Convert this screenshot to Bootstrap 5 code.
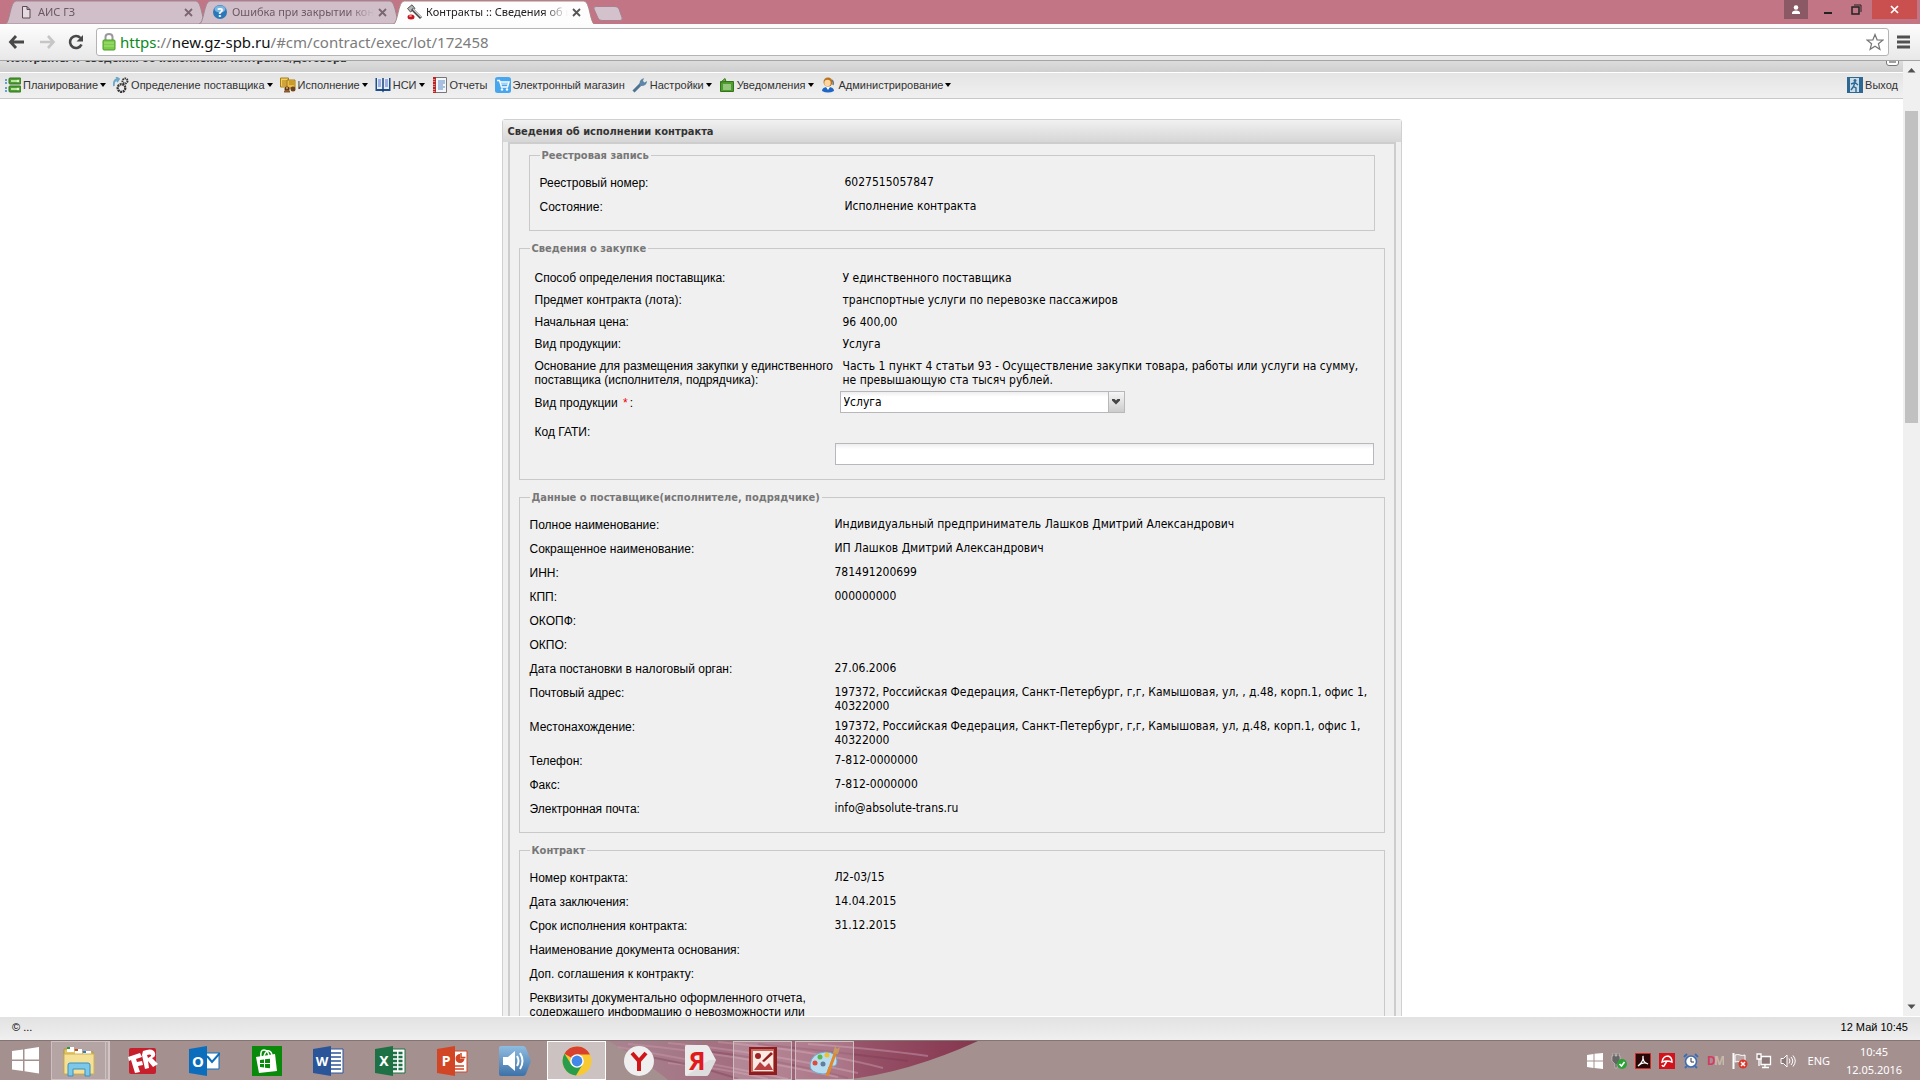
<!DOCTYPE html>
<html lang="ru">
<head>
<meta charset="utf-8">
<meta name="viewport" content="width=device-width, initial-scale=1">
<title>Контракты :: Сведения об исполнении контракта/договора</title>
<link rel="stylesheet" href="https://cdn.jsdelivr.net/npm/bootstrap@5.3.0/dist/css/bootstrap.min.css">
<style>
:root{--ui:"Liberation Sans",Arial,sans-serif;--form:"DejaVu Sans Condensed","DejaVu Sans",sans-serif;--sys:"Noto Sans","Open Sans",sans-serif}
body{font-family:var(--ui);font-size:11px;line-height:14px;color:#000;background:#fff}
button{font:inherit;color:inherit;border:0;background:none;padding:0}
svg{display:block;flex:none}

/* browser frame */
.tabstrip{background:#c27585;height:24px;font-family:var(--sys);padding-left:5px}
.btab{position:relative;width:202px;height:24px;margin-right:-8px;padding:0 10px 0 13px;color:#6b5862}
.btab.current{z-index:2;color:#222}
.btab .shape{position:absolute;inset:0;width:100%;height:100%;z-index:-1}
.btab{isolation:isolate}
.btab .cap{width:142px;-webkit-mask-image:linear-gradient(90deg,#000 82%,transparent 100%);mask-image:linear-gradient(90deg,#000 82%,transparent 100%)}
.newtab{margin:6px 0 0 6px}
.winbtn{height:19px;width:24px}
.winbtn.user{background:#8b5865}
.winbtn.close{background:#c9504f;width:45px;margin-right:3px}
.toolbar{height:37px;background:linear-gradient(#fdfdfd,#e8e8e8);border-bottom:1px solid #a4a4a4;padding:4px 10px 4px 8px}
.toolbar .nav-ic{width:20px;margin-right:10px}
.address{height:28px;border:1px solid #b4b4b4;border-radius:3px;background:#fff;padding:0 4px 0 5px;margin:0 8px 0 -2px}
.address .url{font-family:var(--sys);font-size:15px;line-height:24px;color:#7c7c7c}
.url .sec{color:#0b8a1b}.url .host{color:#111}

/* application */
.pagehead{height:12px;background:linear-gradient(#dcdcdc,#cfcfcf);border-bottom:1px solid #fff;font:bold 11px/14px var(--form);color:#333;padding:0 4px 0 6px}
.pagehead .headtext{margin-top:-9px}
.menubar{height:26px;background:linear-gradient(#e4e4e4,#f0f0f0);border-bottom:1px solid #c8c8c8;padding:0 5px 2px;gap:7px;color:#333}
.menubar button,.menubar a{gap:2px;color:#333}
.caret{border:3px solid transparent;border-top:4px solid #000;border-bottom:0}
.scroller{width:17px;background:#f0f0f0;padding:6px 2px}
.scroller .thumb{height:312px;background:#c1c1c1;margin-top:38px}
.panelbox{width:100%;max-width:900px;border:1px solid #d0d0d0;border-radius:3px 3px 0 0;background:#f0f0f0;margin:20px auto 0}
.panelbox h1{height:22px;margin:0;padding:1px 5px 0;font:bold 11px/21px var(--form);color:#333;background:linear-gradient(#f1f1f1,#d6d6d6)}
.panelin{margin:0 5px;border:2px solid #cdcdcd;border-bottom:0;padding:4px 9px 0 9px}
.group{border:1px solid #c9c9c9;padding:0 10px 11px;margin-bottom:10px}
.group.inset{margin:0 10px 10px 10px}
.group legend{float:none;width:auto;margin:0 0 8px;padding:1px 2px 0;font:bold 11px/14px var(--form);color:#777}
.frow{min-height:24px;font-family:var(--form);font-size:12px}
.frow .lab{font-family:var(--ui);width:305px;flex:none;padding-top:5px}
.frow .val{padding:4px 0 2px;flex:1;min-width:0}
.purchase{padding:3px 0 3px 5px}
.purchase .frow{min-height:22px}
.purchase .lab{width:308px;padding-top:4px}
.purchase .val{padding-bottom:4px}
.purchase .frow.pick{min-height:30px}
.purchase .frow.pick .lab{padding-top:5px}
.purchase .frow.code .lab{width:300px}
.pick select{appearance:none;width:285px;height:22px;margin-left:-3px;border:1px solid #b8b8bc;border-radius:0;padding:0 20px 0 3px;font:12px var(--form);color:#000;background:linear-gradient(#eee,#fff 5px)}
.pick .arrow{position:absolute;right:1px;top:1px;width:16px;height:20px;border-left:1px solid #b8b8bc;background:linear-gradient(#f6f6f6,#ccc);pointer-events:none}
.code input{width:100%;height:22px;margin-top:22px;border:1px solid #b8b8bc;background:linear-gradient(#eee,#fff 5px);font:12px var(--form);padding:0 3px}
.star{color:#e00;padding:0 2px}
.statusbar{height:25px;border-top:1px solid #fff;background:linear-gradient(#e2e2e2,#efefef);padding:0 12px 2px}

/* taskbar */
.taskbar{height:40px;background:#a59090;border-top:1px solid #857474;isolation:isolate}
.wall{position:absolute;left:608px;top:0;z-index:-1}
.startbtn{width:51px;padding-left:12px}
.tbtn{width:59px;height:39px;margin-right:3px;border:1px solid transparent}
.tbtn.open{border-color:#cdbfc2;background:rgba(255,255,255,.18)}
.tbtn.active{border:1px solid #fff;background:rgba(255,255,255,.45)}
.tbtn.stack{width:55px;margin-right:7px;box-shadow:3px 0 0 -1px #b8a9a9,4px 0 0 0 #d0c4c4}
.tray{gap:8px;color:#fff;font-family:var(--sys)}
.clock{width:82px;padding-right:10px}
svg text{font-family:var(--sys);font-weight:bold}
</style>
<script src="https://cdn.jsdelivr.net/npm/bootstrap@5.3.0/dist/js/bootstrap.bundle.min.js"></script>
</head>
<body>
<div class="d-flex flex-column vh-100 overflow-hidden">

<header>
  <div class="tabstrip d-flex">
    <div class="btab d-flex align-items-center gap-1">
      <svg class="shape" viewBox="0 0 202 24" preserveAspectRatio="none"><path d="M0 24C5 24 5 1 11 1H191C197 1 197 24 202 24Z" fill="#d0bfc9" stroke="#a18591"/></svg>
      <svg width="16" height="16" viewBox="0 0 16 16"><path d="M4.500 2.500h4.500l3 3v8.500h-7.500zM9 2.500v3h3" fill="#e4d9df" stroke="#5b4a53"/></svg>
      <span class="cap text-nowrap overflow-hidden">АИС ГЗ</span>
      <button aria-label="Закрыть"><svg width="9" height="9" viewBox="0 0 9 9"><path d="M1 1l7 7M8 1l-7 7" stroke="#7a6670" stroke-width="1.800"/></svg></button>
    </div>
    <div class="btab d-flex align-items-center gap-1">
      <svg class="shape" viewBox="0 0 202 24" preserveAspectRatio="none"><path d="M0 24C5 24 5 1 11 1H191C197 1 197 24 202 24Z" fill="#d0bfc9" stroke="#a18591"/></svg>
      <svg width="16" height="16" viewBox="0 0 16 16"><circle cx="8" cy="8" r="7" fill="#2a78b8"/><ellipse cx="8" cy="5" rx="5.500" ry="3.500" fill="#7cb6e0"/><text x="8" y="12.500" font-size="12" text-anchor="middle" fill="#fff">?</text></svg>
      <span class="cap text-nowrap overflow-hidden">Ошибка при закрытии контракта</span>
      <button aria-label="Закрыть"><svg width="9" height="9" viewBox="0 0 9 9"><path d="M1 1l7 7M8 1l-7 7" stroke="#7a6670" stroke-width="1.800"/></svg></button>
    </div>
    <div class="btab current d-flex align-items-center gap-1">
      <svg class="shape" viewBox="0 0 202 24" preserveAspectRatio="none"><path d="M0 24.500C5 24 5 1 11 1H191C197 1 197 24 202 24.500Z" fill="#fdfdfd" stroke="#a88"/></svg>
      <svg width="16" height="16" viewBox="0 0 16 16"><path d="M1.500 4.500L6 .8l3 3.700-4.500 3.500z" fill="#b5b5b5" stroke="#555"/><path d="M6 5l9 9" stroke="#444" stroke-width="2.800"/><path d="M7 5l8 8" stroke="#ccc" stroke-width="1.200"/><ellipse cx="5" cy="13" rx="3.500" ry="2.500" fill="#c8141e"/><ellipse cx="4.500" cy="12" rx="1.500" ry="1" fill="#f58a8a"/></svg>
      <span class="cap text-nowrap overflow-hidden">Контракты :: Сведения об исполнении</span>
      <button aria-label="Закрыть"><svg width="9" height="9" viewBox="0 0 9 9"><path d="M1 1l7 7M8 1l-7 7" stroke="#555" stroke-width="1.800"/></svg></button>
    </div>
    <button class="newtab align-self-start" aria-label="Новая вкладка"><svg width="31" height="15" viewBox="0 0 31 15"><path d="M3 .5H22Q25 .5 26 3L29 11.500Q30 14.500 27 14.500H9Q6 14.500 5 12L1 3Q0 .5 3 .5Z" fill="#d3c2cc" stroke="#a88090"/></svg></button>
    <div class="ms-auto d-flex">
      <button class="winbtn user d-flex justify-content-center align-items-center" aria-label="Профиль"><svg width="12" height="10" viewBox="0 0 12 10"><circle cx="6" cy="2.500" r="2.300" fill="#fff"/><path d="M2 9V8Q2 5.500 6 5.500T10 8V9Z" fill="#fff"/></svg></button>
      <button class="winbtn ms-2 d-flex justify-content-center align-items-center" aria-label="Свернуть"><svg width="10" height="10" viewBox="0 0 10 10"><path d="M1 8h8" stroke="#222" stroke-width="2"/></svg></button>
      <button class="winbtn mx-1 d-flex justify-content-center align-items-center" aria-label="Восстановить"><svg width="11" height="11" viewBox="0 0 11 11"><path d="M1 3h7v7H1z" fill="none" stroke="#222" stroke-width="1.500"/><path d="M3 1h7v7" fill="none" stroke="#222"/></svg></button>
      <button class="winbtn close d-flex justify-content-center align-items-center" aria-label="Закрыть окно"><svg width="9" height="9" viewBox="0 0 9 9"><path d="M1 1l7 7M8 1l-7 7" stroke="#fff" stroke-width="1.700"/></svg></button>
    </div>
  </div>
  <div class="toolbar d-flex align-items-center">
    <button class="nav-ic" aria-label="Назад"><svg width="18" height="16" viewBox="0 0 18 16"><path d="M8 2L2.500 8L8 14M3 8H16" fill="none" stroke="#484848" stroke-width="2.800"/></svg></button>
    <button class="nav-ic" aria-label="Вперёд"><svg width="18" height="16" viewBox="0 0 18 16"><path d="M10 2L15.500 8L10 14M15 8H2" fill="none" stroke="#c6c6c6" stroke-width="2.600"/></svg></button>
    <button class="nav-ic" aria-label="Обновить"><svg width="17" height="16" viewBox="0 0 17 16"><path d="M12.500 4A6 6 0 1 0 13.500 10.500" fill="none" stroke="#484848" stroke-width="2.600"/><path d="M15 1v6.500h-6.500z" fill="#484848"/></svg></button>
    <div class="address flex-grow-1 d-flex align-items-center">
      <svg width="14" height="20" viewBox="0 0 14 20" class="me-1"><path d="M3.500 9V5Q3.500 2 7 2T10.500 5V9" fill="none" stroke="#999" stroke-width="2"/><rect x="1" y="8" width="12" height="10" rx="1" fill="#7ccc4a" stroke="#4b9a2c"/><path d="M2 11h10M2 14h10" stroke="#a8e27f"/></svg>
      <div class="url flex-grow-1"><span class="sec">https</span>://<span class="host">new.gz-spb.ru</span>/#cm/contract/exec/lot/172458</div>
      <svg width="18" height="18" viewBox="0 0 18 18"><path d="M9 1.500l2.100 5.300 5.700.3-4.400 3.600 1.500 5.600L9 13.200 4.100 16.300l1.500-5.600L1.200 7.100l5.700-.3z" fill="#fff" stroke="#777" stroke-width="1.200"/></svg>
    </div>
    <button aria-label="Меню"><svg width="13" height="14" viewBox="0 0 13 14"><path d="M0 2h13M0 7h13M0 12h13" stroke="#505050" stroke-width="3"/></svg></button>
  </div>
</header>

<div class="d-flex flex-grow-1 overflow-hidden">
  <div class="flex-grow-1 overflow-hidden">
    <div class="pagehead d-flex justify-content-between overflow-hidden">
      <div class="headtext">Контракты :: Сведения об исполнении контракта/договора</div>
      <svg width="13" height="5" viewBox="0 0 13 5"><path d="M.5 0V2Q.5 4.500 3 4.500H10Q12.500 4.500 12.500 2V0" fill="#fff" stroke="#777"/><path d="M3 1h7" stroke="#444"/></svg>
    </div>
    <nav class="menubar d-flex align-items-center">
      <button class="d-flex align-items-center"><svg width="16" height="16" viewBox="0 0 16 16"><path d="M0 3h2M0 6h2M0 11h2M0 14h2" stroke="#3a8ac0" stroke-width="1.500"/><rect x="4" y="1" width="12" height="6" rx="1" fill="#4f9d33" stroke="#2f7420"/><rect x="4" y="9" width="12" height="6" rx="1" fill="#4f9d33" stroke="#2f7420"/><path d="M6 4h6M6 12h6" stroke="#b4e296" stroke-width="2"/><circle cx="13" cy="4" r="1.300" fill="#e0f5d0"/><circle cx="13" cy="12" r="1.300" fill="#e0f5d0"/></svg><span>Планирование</span><i class="caret"></i></button>
      <button class="d-flex align-items-center"><svg width="16" height="16" viewBox="0 0 16 16"><path d="M1 9Q0 3 5 2M3 0l3 2-2 3" fill="none" stroke="#6aa8c8" stroke-width="1.800"/><circle cx="12" cy="4" r="2.500" fill="none" stroke="#333" stroke-width="2" stroke-dasharray="1.500 .7"/><circle cx="8.500" cy="11" r="3.800" fill="none" stroke="#333" stroke-width="2.300" stroke-dasharray="2 .6"/></svg><span>Определение поставщика</span><i class="caret"></i></button>
      <button class="d-flex align-items-center"><svg width="16" height="16" viewBox="0 0 16 16"><path d="M.5 1h8v9h-8z" fill="#f2cf5c" stroke="#a87a18"/><path d="M2 4h5M2 6h5M2 8h5" stroke="#a87a18"/><path d="M7 3h8v8H7z" fill="#e9bd45" stroke="#a87a18"/><path d="M9 5h5M9 7h5" stroke="#a87a18"/><circle cx="7" cy="12" r="2.500" fill="#5a3418"/><circle cx="13" cy="12" r="2.500" fill="#6e4420"/><circle cx="7" cy="11" r="1" fill="#d9a070"/><path d="M4 14q3-3 6 0v1.500H4z" fill="#8d5a2b"/></svg><span>Исполнение</span><i class="caret"></i></button>
      <button class="d-flex align-items-center"><svg width="16" height="16" viewBox="0 0 16 16"><path d="M.5 1h15v13H9l-1 1.500L7 14H.5z" fill="#1f4f88"/><path d="M2 1h5.500v11H2zM8.500 1H14v11H8.500z" fill="#e6eefc"/><path d="M3 3h3M3 5h3M3 7h3M3 9h3M10 3h3M10 5h3M10 7h3M10 9h3" stroke="#5b6fd0"/><path d="M8 1v13" stroke="#153b68"/></svg><span>НСИ</span><i class="caret"></i></button>
      <a href="#reports" class="d-flex align-items-center text-decoration-none"><svg width="16" height="16" viewBox="0 0 16 16"><path d="M3.500.5h11v15h-11z" fill="#f4f6fa" stroke="#777"/><path d="M2.500 0v16" stroke="#c32020" stroke-width="3" stroke-dasharray="2 .5"/><path d="M6 4h7M6 6h7M6 8h5M6 10h7M6 12h5" stroke="#5a8ac6"/></svg><span>Отчеты</span></a>
      <a href="#shop" class="d-flex align-items-center text-decoration-none"><svg width="16" height="16" viewBox="0 0 16 16"><rect width="16" height="16" rx="2.500" fill="#47a7ee"/><path d="M2 3.500h2.500l2 6.500h6l1.500-5H5.500" fill="none" stroke="#fff" stroke-width="1.400"/><path d="M6 7h7" stroke="#fff"/><circle cx="7" cy="12.500" r="1.200" fill="#fff"/><circle cx="12" cy="12.500" r="1.200" fill="#fff"/></svg><span>Электронный магазин</span></a>
      <button class="d-flex align-items-center"><svg width="16" height="16" viewBox="0 0 16 16"><path d="M1.500 14.500L9 7" stroke="#4f7391" stroke-width="3"/><path d="M8 9Q6 3 12 1L11 4l1.500 1.500L15 4Q15 9 9 9z" fill="#5f86a6"/></svg><span>Настройки</span><i class="caret"></i></button>
      <button class="d-flex align-items-center"><svg width="16" height="16" viewBox="0 0 16 16"><path d="M1.500 4.500h13v10h-13z" fill="#4f9d2f" stroke="#34751c"/><path d="M2 5L6 1.500l1 3z" fill="#6cb848" stroke="#34751c"/><path d="M4 8h8M4 10h8M4 12h8" stroke="#d8f0c8"/></svg><span>Уведомления</span><i class="caret"></i></button>
      <button class="d-flex align-items-center"><svg width="16" height="16" viewBox="0 0 16 16"><circle cx="7" cy="5" r="4.500" fill="#b8731d"/><circle cx="6.500" cy="6" r="3.200" fill="#ffd5a0"/><path d="M11 3q2 2 1 5" stroke="#777" fill="none" stroke-width="1.500"/><path d="M1 14q0-4 6-4t6 4q-6 3-12 0z" fill="#1d66c4"/><path d="M5 10l2 3 2-3z" fill="#fff"/></svg><span>Администрирование</span><i class="caret"></i></button>
      <a href="#logout" class="d-flex align-items-center text-decoration-none ms-auto"><svg width="16" height="16" viewBox="0 0 16 16"><rect width="16" height="16" fill="#2d6893"/><path d="M3 1h9v14H3z" fill="#c9dce8"/><circle cx="8" cy="3.500" r="1.500" fill="#2d6893"/><path d="M8 5L6.500 9.500 9 11v4M6.500 9.500L4 13M4 7l4-1.500 3 2.500" fill="none" stroke="#2d6893" stroke-width="1.400"/></svg><span>Выход</span></a>
    </nav>
    <main class="px-2">
      <section class="panelbox">
        <h1>Сведения об исполнении контракта</h1>
        <div class="panelin">
          <fieldset class="group inset">
            <legend>Реестровая запись</legend>
            <div class="frow d-flex"><div class="lab">Реестровый номер:</div><div class="val">6027515057847</div></div>
            <div class="frow d-flex"><div class="lab">Состояние:</div><div class="val">Исполнение контракта</div></div>
          </fieldset>
          <fieldset class="group">
            <legend>Сведения о закупке</legend>
            <div class="purchase">
              <div class="frow d-flex"><div class="lab">Способ определения поставщика:</div><div class="val">У единственного поставщика</div></div>
              <div class="frow d-flex"><div class="lab">Предмет контракта (лота):</div><div class="val">транспортные услуги по перевозке пассажиров</div></div>
              <div class="frow d-flex"><div class="lab">Начальная цена:</div><div class="val">96 400,00</div></div>
              <div class="frow d-flex"><div class="lab">Вид продукции:</div><div class="val">Услуга</div></div>
              <div class="frow d-flex"><div class="lab">Основание для размещения закупки у единственного поставщика (исполнителя, подрядчика):</div><div class="val">Часть 1 пункт 4 статьи 93 - Осуществление закупки товара, работы или услуги на сумму,<br>не превышающую ста тысяч рублей.</div></div>
              <div class="frow pick d-flex"><label class="lab" for="kind">Вид продукции <span class="star">*</span>:</label><div class="position-relative align-self-start"><select id="kind"><option>Услуга</option><option>Товар</option><option>Работа</option></select><span class="arrow d-flex justify-content-center align-items-center"><svg width="8" height="6" viewBox="0 0 8 6"><path d="M0 0h2.500L4 1.500 5.500 0H8v1.500L4 5.500 0 1.500z" fill="#444"/></svg></span></div></div>
              <div class="frow code d-flex"><label class="lab" for="gati">Код ГАТИ:</label><div class="flex-grow-1"><input id="gati" type="text"></div></div>
            </div>
          </fieldset>
          <fieldset class="group">
            <legend>Данные о поставщике(исполнителе, подрядчике)</legend>
            <div class="frow d-flex"><div class="lab">Полное наименование:</div><div class="val">Индивидуальный предприниматель Лашков Дмитрий Александрович</div></div>
            <div class="frow d-flex"><div class="lab">Сокращенное наименование:</div><div class="val">ИП Лашков Дмитрий Александрович</div></div>
            <div class="frow d-flex"><div class="lab">ИНН:</div><div class="val">781491200699</div></div>
            <div class="frow d-flex"><div class="lab">КПП:</div><div class="val">000000000</div></div>
            <div class="frow d-flex"><div class="lab">ОКОПФ:</div><div class="val"></div></div>
            <div class="frow d-flex"><div class="lab">ОКПО:</div><div class="val"></div></div>
            <div class="frow d-flex"><div class="lab">Дата постановки в налоговый орган:</div><div class="val">27.06.2006</div></div>
            <div class="frow d-flex"><div class="lab">Почтовый адрес:</div><div class="val">197372, Российская Федерация, Санкт-Петербург, г,г, Камышовая, ул, , д.48, корп.1, офис 1,<br>40322000</div></div>
            <div class="frow d-flex"><div class="lab">Местонахождение:</div><div class="val">197372, Российская Федерация, Санкт-Петербург, г,г, Камышовая, ул, д.48, корп.1, офис 1,<br>40322000</div></div>
            <div class="frow d-flex"><div class="lab">Телефон:</div><div class="val">7-812-0000000</div></div>
            <div class="frow d-flex"><div class="lab">Факс:</div><div class="val">7-812-0000000</div></div>
            <div class="frow d-flex"><div class="lab">Электронная почта:</div><div class="val">info@absolute-trans.ru</div></div>
          </fieldset>
          <fieldset class="group">
            <legend>Контракт</legend>
            <div class="frow d-flex"><div class="lab">Номер контракта:</div><div class="val">Л2-03/15</div></div>
            <div class="frow d-flex"><div class="lab">Дата заключения:</div><div class="val">14.04.2015</div></div>
            <div class="frow d-flex"><div class="lab">Срок исполнения контракта:</div><div class="val">31.12.2015</div></div>
            <div class="frow d-flex"><div class="lab">Наименование документа основания:</div><div class="val"></div></div>
            <div class="frow d-flex"><div class="lab">Доп. соглашения к контракту:</div><div class="val"></div></div>
            <div class="frow d-flex"><div class="lab">Реквизиты документально оформленного отчета, содержащего информацию о невозможности или</div><div class="val"></div></div>
          </fieldset>
        </div>
      </section>
    </main>
  </div>
  <div class="scroller d-flex flex-column">
    <svg class="mx-auto" width="9" height="6" viewBox="0 0 9 6"><path d="M4.500 1L8.500 5.500h-8z" fill="#505050"/></svg>
    <div class="thumb"></div>
    <svg class="mx-auto mt-auto" width="9" height="6" viewBox="0 0 9 6"><path d="M4.500 5L.5.5h8z" fill="#505050"/></svg>
  </div>
</div>

<div class="statusbar d-flex justify-content-between align-items-center"><span>© ...</span><span>12 Май 10:45</span></div>

<footer class="taskbar position-relative d-flex">
  <svg class="wall" width="372" height="39" viewBox="0 0 372 39"><defs><linearGradient id="wg"><stop offset="0" stop-color="#a88490"/><stop offset=".5" stop-color="#a06478"/><stop offset="1" stop-color="#86364f"/></linearGradient></defs><path d="M0 0H370Q300 32 235 39H60Q40 22 0 0Z" fill="url(#wg)"/><path d="M20 3Q120 12 230 36M60 2Q150 10 250 32M110 1Q210 10 275 27M10 6Q90 20 180 38M200 3Q270 8 320 15M60 22Q110 26 160 38" fill="none" stroke="#c795a8" stroke-width="2" opacity=".5"/><path d="M80 8Q170 18 240 37M150 3Q240 12 300 20M30 14Q90 24 130 38" fill="none" stroke="#7a3550" stroke-width="2" opacity=".35"/></svg>
  <button class="startbtn" aria-label="Пуск"><svg width="28" height="27" viewBox="0 0 28 27"><path d="M0 4L11 2.500V12.500H0zM12.500 2.200L27 0V12.500H12.500zM0 14H11V24L0 22.500zM12.500 14H27V26.500L12.500 24.300z" fill="#fff"/></svg></button>
  <button class="tbtn open stack d-flex justify-content-center align-items-center" aria-label="Проводник"><svg width="32" height="32" viewBox="0 0 32 32"><path d="M1 4h10l2 3h17v22H1z" fill="#e3c665" stroke="#b4953a"/><path d="M4 2h7v5H4zM12 4h7v5h-7zM20 6h8v5h-8z" fill="#fff"/><path d="M4 2h3v2H4z" fill="#2b9b3c"/><path d="M12 4h3v2h-3z" fill="#cc4a2a"/><path d="M20 6h3v2h-3z" fill="#2a80c8"/><path d="M1 9h30v20H1z" fill="#f4e097" stroke="#cdb052"/><path d="M5 31V20q0-2 2-2h18q2 0 2 2v11h-5v-7H10v7z" fill="#7cc8ea" stroke="#3a90ba"/></svg></button>
  <button class="tbtn d-flex justify-content-center align-items-center" aria-label="FineReader"><svg width="30" height="28" viewBox="0 0 30 28"><rect x="1" y="1" width="27" height="26" rx="2" fill="#c81f2d"/><path d="M0 10L12 6l2 4-6 2 1 3 5-1 1 4-5 1 2 6-5 1L3 13l-2 1zM15 4q10-4 12 2 1 4-3 5l6 6-5 3-5-6 1 7-4 1-3-14zM19 8l1 3q4-2 3-3-1-1-4 0z" fill="#fff"/></svg></button>
  <button class="tbtn d-flex justify-content-center align-items-center" aria-label="Outlook"><svg width="31" height="30" viewBox="0 0 31 30"><path d="M17 7h13v16H17z" fill="#fff" stroke="#0a6ebd"/><path d="M18 10l5 6 8-9" fill="none" stroke="#0a6ebd" stroke-width="2"/><path d="M0 3L18 0V30L0 27z" fill="#0a6ebd"/><text x="9" y="21" font-size="15" text-anchor="middle" fill="#fff">O</text></svg></button>
  <button class="tbtn d-flex justify-content-center align-items-center" aria-label="Магазин"><svg width="30" height="30" viewBox="0 0 30 30"><rect width="30" height="30" fill="#0a8a0a"/><path d="M4 11l19-3 2 17-18 2z" fill="#fff"/><path d="M9 11Q8 4 12 4t5 6M12 10Q14 4 17 5t3 5" fill="none" stroke="#fff" stroke-width="1.500"/><path d="M8 14l4-.5V17H8zM13 13.300l5-.6V17h-5zM8 18h4v3.500L8 21zM13 18h5v4.300l-5-.6z" fill="#0a8a0a"/></svg></button>
  <button class="tbtn d-flex justify-content-center align-items-center" aria-label="Word"><svg width="31" height="30" viewBox="0 0 31 30"><path d="M16 3h14v24H16z" fill="#fff" stroke="#2a5599"/><path d="M18 7h10M18 11h10M18 15h10M18 19h10M18 23h10" stroke="#2a5599" stroke-width="1.500"/><path d="M0 3L18 0V30L0 27z" fill="#2a5599"/><text x="9" y="20" font-size="13" text-anchor="middle" fill="#fff">W</text></svg></button>
  <button class="tbtn d-flex justify-content-center align-items-center" aria-label="Excel"><svg width="31" height="30" viewBox="0 0 31 30"><path d="M16 3h14v24H16z" fill="#fff" stroke="#1e7145"/><path d="M18 7h10M18 11h10M18 15h10M18 19h10M18 23h10" stroke="#1e7145" stroke-width="2.500" stroke-dasharray="4 1.500"/><path d="M0 3L18 0V30L0 27z" fill="#1e7145"/><text x="9" y="20" font-size="14" text-anchor="middle" fill="#fff">X</text></svg></button>
  <button class="tbtn d-flex justify-content-center align-items-center" aria-label="PowerPoint"><svg width="31" height="30" viewBox="0 0 31 30"><path d="M16 5h14v21H16z" fill="#fff" stroke="#d24625"/><path d="M23 8a4.500 4.500 0 1 0 4.500 4.500H23z" fill="#d24625"/><path d="M24 7v4.500h4.500" fill="none" stroke="#d24625" stroke-width="1.500"/><path d="M18 20h9M18 23h9" stroke="#d24625" stroke-width="1.500"/><path d="M0 3L18 0V30L0 27z" fill="#d24625"/><text x="9" y="20" font-size="14" text-anchor="middle" fill="#fff">P</text></svg></button>
  <button class="tbtn d-flex justify-content-center align-items-center" aria-label="Звук"><svg width="32" height="32" viewBox="0 0 32 32"><defs><linearGradient id="sg" x2="0" y2="1"><stop stop-color="#8fbce0"/><stop offset="1" stop-color="#3d72a8"/></linearGradient></defs><path d="M2 1h22q2 0 3 2l5 13-5 13q-1 2-3 2H2q-2 0-2-2V3q0-2 2-2z" fill="url(#sg)"/><path d="M4 12h5l7-6v20l-7-6H4z" fill="#fff"/><path d="M18 11q3 5 0 10M21 8q5 8 0 16" fill="none" stroke="#fff" stroke-width="2"/></svg></button>
  <button class="tbtn active d-flex justify-content-center align-items-center" aria-label="Chrome"><svg width="30" height="30" viewBox="0 0 30 30"><circle cx="15" cy="15" r="14.500" fill="#f9c932"/><path d="M15 15L2.500 7.700A14.500 14.500 0 0 1 28 8.500H15z" fill="#d9412f"/><path d="M2.500 7.700A14.500 14.500 0 0 0 14 29.500L20.500 18.500 15 15 9 18z" fill="#2a9d4c"/><circle cx="15" cy="15" r="6.800" fill="#fff"/><circle cx="15" cy="15" r="5.400" fill="#4387e8"/></svg></button>
  <button class="tbtn d-flex justify-content-center align-items-center" aria-label="Яндекс.Браузер"><svg width="30" height="30" viewBox="0 0 30 30"><circle cx="15" cy="15" r="15" fill="#f0eff0"/><path d="M8 7l7 8 7-8M15 15v10" fill="none" stroke="#d01616" stroke-width="4"/></svg></button>
  <button class="tbtn d-flex justify-content-center align-items-center" aria-label="Яндекс"><svg width="31" height="31" viewBox="0 0 31 31"><path d="M1 0h20q2 0 3 2l7 13-7 14q-1 2-3 2H1q-1 0-1-2V2q0-2 1-2z" fill="#ecebeb"/><path d="M24 15h7l-7 14q-1 2-3 2H1z" fill="#d5d3d4" opacity=".6"/><text x="12" y="25" font-size="25" text-anchor="middle" fill="#e01b1b">Я</text></svg></button>
  <button class="tbtn open d-flex justify-content-center align-items-center" aria-label="Редактор"><svg width="28" height="28" viewBox="0 0 28 28"><path d="M0 0h28v28H0z" fill="#8f1d1d"/><path d="M2 2h23v23H2z" fill="#c96a60"/><path d="M4 4h20v20H4z" fill="#fbe9e4"/><circle cx="9" cy="9" r="3" fill="#a02424"/><path d="M5 23l6-8 5 5 4-4 4 7z" fill="#b84040"/><path d="M13 14l9-9 2 2-9 8z" fill="#8f1d1d"/></svg></button>
  <button class="tbtn open d-flex justify-content-center align-items-center" aria-label="Paint"><svg width="32" height="32" viewBox="0 0 32 32"><path d="M1 19Q3 8 16 7q12 0 12 9 0 6-5 5-4 0-4 4 0 4-5 4Q0 28 1 19z" fill="#b8dcf0" stroke="#6fa6c8"/><circle cx="6" cy="18" r="2.500" fill="#e04a3a"/><circle cx="11" cy="12" r="2.500" fill="#5ab848"/><circle cx="18" cy="10" r="2.500" fill="#f2c12e"/><circle cx="14" cy="19" r="2.500" fill="#5f7f9c"/><path d="M27 6L18 31" stroke="#e0882a" stroke-width="3"/><path d="M24 8l2-7 2 3 3-2-2 7z" fill="#c79a62"/></svg></button>

  <div class="tray ms-auto d-flex align-items-center">
    <svg width="16" height="16" viewBox="0 0 16 16"><path d="M0 2l6.500-1v6.500H0zM7.500.8L16 0v7.500H7.500zM0 8.500h6.500V15L0 14zM7.500 8.500H16V16l-8.500-1z" fill="#fff"/></svg>
    <svg width="16" height="16" viewBox="0 0 16 16"><path d="M2 0h2v3h2V0h2v3h1v5L6 11v4H4v-4L1 8V3h1z" fill="#666" stroke="#ddd" stroke-width=".5"/><circle cx="11" cy="11" r="5" fill="#2aa236"/><path d="M8.500 11l2 2 3-4" fill="none" stroke="#fff" stroke-width="1.600"/></svg>
    <svg width="16" height="16" viewBox="0 0 16 16"><path d="M.5.5h15v15H.5z" fill="#2a0808" stroke="#d0281e"/><path d="M3 13Q9 8 8 3 7 9 13 11 8 8 3 13z" fill="none" stroke="#fff" stroke-width="1.300"/></svg>
    <svg width="16" height="16" viewBox="0 0 16 16"><path d="M0 0h16v16H0z" fill="#d3131c"/><path d="M3 9q1-6 6-6 4 1 4 6-5-2-10 0zM8 8l-3 5q-1 1-2-1" fill="none" stroke="#fff" stroke-width="1.500"/></svg>
    <svg width="16" height="16" viewBox="0 0 16 16"><circle cx="8" cy="8.500" r="5.500" fill="#fff" stroke="#3d6db5" stroke-width="1.600"/><path d="M1 4l3-3M15 4l-3-3M4 13l-2 2M12 13l2 2" stroke="#3d6db5" stroke-width="2"/><path d="M8 5v4h3" fill="none" stroke="#333"/></svg>
    <svg width="17" height="16" viewBox="0 0 17 16"><text x="0" y="12" font-size="12" fill="#d83a64">D</text><text x="7" y="12" font-size="12" fill="#c9b9a8">M</text></svg>
    <svg width="16" height="16" viewBox="0 0 16 16"><path d="M1.500 0v16" stroke="#fff" stroke-width="2"/><path d="M3 2q3-1 5 0t5 0v7q-3 1-5 0T3 9z" fill="#b9a7a7" stroke="#fff"/><circle cx="11" cy="11" r="4.500" fill="#d9382a"/><path d="M9 9l4 4M13 9l-4 4" stroke="#fff" stroke-width="1.500"/></svg>
    <svg width="16" height="16" viewBox="0 0 16 16"><path d="M5 3.500h9.500v8H5zM9 12v3M6 14.500h7" fill="#8b7777" stroke="#fff" stroke-width="1.300"/><path d="M1 1h4v5H1zM3 6v7" fill="#8b7777" stroke="#fff" stroke-width="1.300"/></svg>
    <svg width="16" height="16" viewBox="0 0 16 16"><path d="M1 5.500h2.500L7 2v12L3.500 10.500H1z" fill="#8b7777" stroke="#fff"/><path d="M9 5.500q2 2.500 0 5M11 4q3.500 4 0 8M13 2.500q4.500 5.500 0 11" fill="none" stroke="#fff"/></svg>
    <span class="ms-1">ENG</span>
    <div class="clock text-center lh-sm"><div>10:45</div><div class="mt-1">12.05.2016</div></div>
  </div>
</footer>
</div>
</body>
</html>
